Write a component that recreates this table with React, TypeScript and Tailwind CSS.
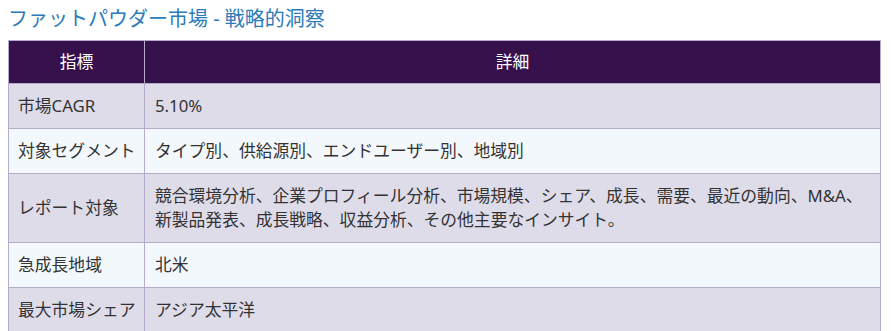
const rows: [string, string][] = [
  ["市場CAGR", "5.10%"],
  ["対象セグメント", "タイプ別、供給源別、エンドユーザー別、地域別"],
  [
    "レポート対象",
    "競合環境分析、企業プロフィール分析、市場規模、シェア、成長、需要、最近の動向、M&A、新製品発表、成長戦略、収益分析、その他主要なインサイト。",
  ],
  ["急成長地域", "北米"],
  ["最大市場シェア", "アジア太平洋"],
];

export default function App() {
  return (
    <div className="bg-white px-2 pt-1 font-['Noto_Sans','Noto_Sans_CJK_JP',sans-serif] text-[#333]">
      <h2 className="text-[20px] leading-[30px] text-[#2b7bb9] mb-[6px]">
        ファットパウダー市場 - 戦略的洞察
      </h2>
      <table className="w-[873px] border-collapse text-[16.8px] leading-[24px]">
        <thead>
          <tr className="bg-[#35104a] text-white">
            <th className="w-[136px] border border-[#b3abc9] px-[10px] py-[9px] font-normal text-center">
              指標
            </th>
            <th className="border border-[#b3abc9] px-[10px] py-[9px] font-normal text-center">
              詳細
            </th>
          </tr>
        </thead>
        <tbody>
          {rows.map(([k, v], i) => (
            <tr key={k} className={i % 2 === 0 ? "bg-[#dfdcea]" : "bg-[#f3f8fc]"}>
              <td className="border border-[#b3abc9] pl-[9px] pr-[4px] py-[10px] align-middle whitespace-nowrap">
                {k}
              </td>
              <td className="border border-[#b3abc9] px-[10px] py-[10px] align-middle">
                {v}
              </td>
            </tr>
          ))}
        </tbody>
      </table>
    </div>
  );
}
